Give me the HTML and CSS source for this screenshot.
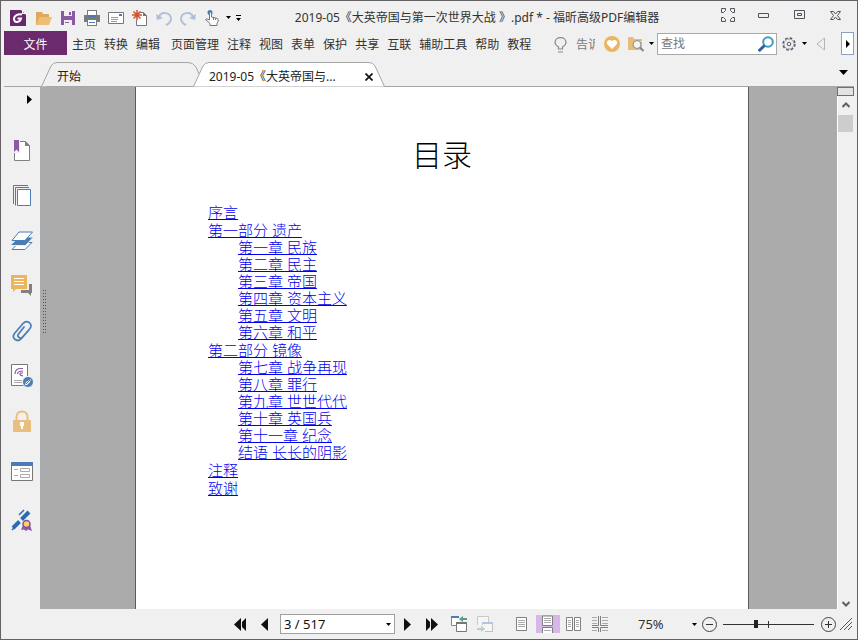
FILE: index.html
```html
<!DOCTYPE html>
<html lang="zh-CN">
<head>
    <meta charset="UTF-8">
    <meta name="viewport" content="width=device-width, initial-scale=1.0">
    <title>2019-05《大英帝国与第一次世界大战 》.pdf * - 福昕高级PDF编辑器</title>
    <link rel="stylesheet" href="styles.css">
</head>
<body>
    <header class="title-bar">
        <div class="quick-access">
            <button class="icon-btn" aria-label="福昕"><svg width="16" height="16" viewBox="0 0 16 16"><path fill="#68286b" d="M0 0h11l5 5v11H0z"/><path fill="#fff" d="M12 0v4h4l-1-1h-2V0z"/><path fill="none" stroke="#fff" stroke-width="2" d="M12 4.500C8 3.500 4 5.500 4 9c0 4.500 6 3.500 7-.5L7.500 8.500"/></svg></button>
            <button class="icon-btn" aria-label="打开"><svg width="16" height="16" viewBox="0 0 16 16"><path fill="#dfa85c" d="M0 2h6l1 2h6v3H4L1 15H0z"/><path fill="#efbd73" d="M4 7h12l-3 8H1z"/></svg></button>
            <button class="icon-btn" aria-label="保存"><svg width="16" height="16" viewBox="0 0 16 16"><path fill="#8a5aa5" d="M1 1h14v14H1z"/><path fill="#f0f0f0" d="M4 1h8v5H4zM4 10h8v5H4z"/><path fill="#8a5aa5" d="M9 2h2v3H9zM5 12h4v1H5z"/></svg></button>
            <button class="icon-btn" aria-label="打印"><svg width="16" height="16" viewBox="0 0 16 16"><path fill="#7a7a7a" d="M3 0h10v5h3v7h-3v4H3v-4H0V5h3z"/><path fill="#fff" d="M4 1h8v4H4zM4 10h8v5H4z"/><path fill="#4a7ab0" d="M4 5h8v2H4zM5 12h6v1H5z"/></svg></button>
            <button class="icon-btn" aria-label="邮件"><svg width="16" height="16" viewBox="0 0 16 16"><path fill="#fff" stroke="#777" d="M.5 2.500h15v11H.5z"/><path stroke="#999" d="M3 7.500h7M3 9.500h7M3 11.500h6"/><path fill="#4a7ab0" d="M11 4h3v2h-3z"/></svg></button>
            <button class="icon-btn" aria-label="新建"><svg width="16" height="16" viewBox="0 0 16 16"><path fill="#fff" stroke="#777" d="M4.500 2.500h7l3 3v10h-10z"/><path fill="#777" d="M11 2v4h4z"/><path stroke="#f0f0f0" stroke-width="3" d="M5 0v10M0 5h10"/><path stroke="#d4512f" stroke-width="1.500" d="M5 0v10M0 5h10M1.500 1.500l7 7M8.500 1.500l-7 7"/></svg></button>
            <button class="icon-btn" aria-label="撤销"><svg width="16" height="16" viewBox="0 0 16 16"><path fill="none" stroke="#aebfd6" stroke-width="2" d="M3 7c2-6 12-5 12 2 0 2-2 5-5 6"/><path fill="#aebfd6" d="M0 4l1 6 6-2z"/></svg></button>
            <button class="icon-btn" aria-label="重做"><svg width="16" height="16" viewBox="0 0 16 16"><path fill="none" stroke="#aebfd6" stroke-width="2" d="M13 7C11 1 1 2 1 9c0 2 2 5 5 6"/><path fill="#aebfd6" d="M16 4l-1 6-6-2z"/></svg></button>
            <button class="icon-btn" aria-label="手型工具"><svg width="16" height="16" viewBox="0 0 16 16"><circle cx="6" cy="2.500" r="2.500" fill="#4a7ab0"/><path fill="#fff" stroke="#777" d="M5.500 10V3q1-1.500 2 0v4l6 1.500q1 1 .5 3l-1 2v2h-7v-2L1.500 9.500q1-1.500 4 .5M9.500 8v2M11.500 8.500V10"/></svg></button>
            <button class="arrow-btn" aria-label="手型工具选项"><svg width="5" height="3"><path d="M0 0h5L2.500 3z"/></svg></button>
            <button class="arrow-btn" aria-label="自定义工具栏"><svg width="5" height="6"><path d="M0 0h5v1H0zM0 3h5L2.500 6z"/></svg></button>
        </div>
        <h1 class="window-title">2019-05《大英帝国与第一次世界大战 》.pdf * - 福昕高级PDF编辑器</h1>
        <div class="window-controls">
            <button aria-label="全屏"><svg width="14" height="14" viewBox="0 0 14 14"><path fill="none" stroke="#50505f" d="M.5.5h4v2l-2 2h-2zM9.500.5h4v4h-2l-2-2zM.5 9.500h2l2 2v2h-4zM13.500 9.500v4h-4v-2l2-2z"/></svg></button>
            <button aria-label="最小化"><svg width="12" height="5"><path fill="none" stroke="#50505f" d="M.5.5h10v4H.5z"/></svg></button>
            <button aria-label="最大化"><svg width="12" height="10"><path fill="none" stroke="#50505f" d="M.5.500h10v8H.5zM3.500 3.500h4v2h-4z"/></svg></button>
            <button aria-label="关闭"><svg width="12" height="9"><path fill="none" stroke="#50505f" d="M.5.500h3l2 2.500 2-2.500h3l-3 4 3 4h-3l-2-2.500-2 2.500h-3l3-4z"/></svg></button>
        </div>
    </header>

    <nav class="ribbon">
        <button class="file-btn">文件</button>
        <div class="menu">
            <button>主页</button>
            <button>转换</button>
            <button>编辑</button>
        </div>
        <div class="menu">
            <button>页面管理</button>
            <button>注释</button>
            <button>视图</button>
            <button>表单</button>
            <button>保护</button>
            <button>共享</button>
            <button>互联</button>
            <button>辅助工具</button>
            <button>帮助</button>
            <button>教程</button>
        </div>
        <div class="ribbon-tools">
            <button class="tell-me"><svg width="13" height="16" viewBox="0 0 13 16"><path fill="none" stroke="#888" stroke-width="1.200" d="M4.500 12V10C2 8.500 1 7 1 5.500 1 2.500 3.500.6 6.500.6S12 2.500 12 5.500c0 1.500-1 3-3.500 4.500v2zM4 15h5"/></svg><span>告诉</span></button>
            <button class="icon-btn" aria-label="收藏"><svg width="16" height="16"><circle cx="8" cy="8" r="8" fill="#e9b562"/><path fill="#fff" d="M8 13L3.500 8.500C1.500 6 4.500 2 8 5c3.500-3 6.500 1 4.500 3.500z"/></svg></button>
            <button class="icon-btn" aria-label="查找文件"><svg width="16" height="16"><path fill="#e9bd78" d="M0 1h5l1 2h8v11H0z"/><path stroke="#f6dcae" d="M6 5.500h8"/><circle cx="9" cy="8.500" r="4" fill="#f4f4f4" stroke="#888"/><path stroke="#888" stroke-width="2" d="M12 11.500l3.500 3.500"/></svg></button>
            <button class="arrow-btn" aria-label="查找文件选项"><svg width="5" height="3"><path d="M0 0h5L2.500 3z"/></svg></button>
            <label class="search">
                <input type="text" placeholder="查找" aria-label="查找">
                <svg width="16" height="16"><circle cx="10" cy="6" r="4.800" fill="#fff" stroke="#3b9cc4" stroke-width="2"/><path stroke="#315f9c" stroke-width="3" d="M6.500 9.500L.8 15"/></svg>
            </label>
            <button class="icon-btn" aria-label="设置"><svg width="14" height="14" viewBox="0 0 14 14"><circle cx="7" cy="7" r="6" fill="none" stroke="#55586a" stroke-width="1.400" stroke-dasharray="2.700 2"/><circle cx="7" cy="7" r="5" fill="#f0f0f0" stroke="#77798a" stroke-width=".7"/><circle cx="7" cy="7" r="1.800" fill="none" stroke="#55586a"/></svg></button>
            <button class="arrow-btn" aria-label="设置选项"><svg width="5" height="3"><path d="M0 0h5L2.500 3z"/></svg></button>
            <button class="back-btn" aria-label="上一个"><svg width="9" height="14"><path fill="none" stroke="#b5b5b5" d="M8.500 1v12l-7.500-6z"/></svg></button>
            <button class="more-btn" aria-label="更多"><svg width="4" height="8"><path d="M0 0l4 4-4 4z"/></svg></button>
        </div>
    </nav>

    <div class="tab-strip">
        <button class="tab">
            <svg class="tab-shape" width="164" height="25"><path d="M.5 24.500L10 4Q12 .5 16 .5H147Q152 .5 155 5L158 12"/></svg>
            <span>开始</span>
        </button>
        <button class="tab active">
            <svg class="tab-shape" width="192" height="25"><path d="M.5 24.500L10 4Q12 .5 16 .5H176Q180 .5 182 4L191.500 24.500"/></svg>
            <span>2019-05《大英帝国与...</span>
            <svg width="8" height="8"><path stroke="#111" stroke-width="1.700" d="M.5.5l7 7M7.500.5l-7 7"/></svg>
        </button>
        <button class="tab-list" aria-label="标签列表"><svg width="9" height="5"><path d="M0 0h9L4.500 5z"/></svg></button>
    </div>

    <main class="workspace">
        <aside class="sidebar">
            <button class="expand" aria-label="展开"><svg width="5" height="9"><path d="M0 0l5 4.500L0 9z"/></svg></button>
            <button aria-label="书签"><svg width="18" height="22"><path fill="#fff" stroke="#808080" d="M1.500 1.500h11l4 4v15h-15z"/><path fill="#808080" d="M12 1v5h5z"/><path fill="#f0f0f0" d="M0 0h7v13H0z"/><path fill="#8a5aa5" d="M1 0h5v12l-2.500-2.500L1 12z"/></svg></button>
            <button aria-label="页面"><svg width="18" height="22"><path fill="none" stroke="#4a7db5" d="M.5 19V.5H15M2.500 20.500v-18H16"/><path fill="#fff" stroke="#4a7db5" d="M4.500 4.500h13v16h-13z"/></svg></button>
            <button aria-label="图层"><svg width="24" height="20"><path fill="#fff" stroke="#4a7db5" d="M2 18.500h13l7-7H9z"/><path fill="#4a7db5" stroke="#f0f0f0" d="M0 14.500h15.500l8-8.500H9z"/><path fill="#fff" stroke="#4a7db5" d="M2 9.500h13l7.500-8.500H9z"/></svg></button>
            <button aria-label="注释"><svg width="22" height="22"><path fill="#808080" d="M10 9h11v9h-1v3l-3-3h-7z"/><path fill="#f0f0f0" d="M0 0h18v15H0z"/><path fill="#edb45e" d="M0 0h16v14H5l-3 3v-3H0z"/><path stroke="#fff" d="M3 3.500h10M3 6.500h10M3 9.500h10"/></svg></button>
            <button aria-label="附件"><svg width="20" height="22" viewBox="0 0 20 22"><path fill="none" stroke="#4a7db5" stroke-width="1.700" stroke-linecap="round" d="M16.500 10.500l-7 8c-4 4.500-10.500 0-7-5l8.500-10c4-4.500 10.500.5 7 5l-7.500 8.500c-2.500 2.500-6-.5-4-3L12 7"/></svg></button>
            <button aria-label="签名"><svg width="22" height="23"><path fill="#fff" stroke="#777" d="M.5.500h16v21H.5z"/><path fill="none" stroke="#8a5aa5" stroke-width="1.200" d="M4 10q0-5 5-5.500h3M6.500 10q0-3 5.500-3M12 9H9.500q-2 2 2.500 3"/><path stroke="#aaa" d="M3 16.500h8M3 18.500h8"/><circle cx="17" cy="18" r="5.500" fill="#4a7db5" stroke="#f0f0f0"/><path fill="#fff" d="M20 15l-1 3-3 3-2 0 1-3z"/><path stroke="#4a7db5" d="M15 20l4-4"/></svg></button>
            <button aria-label="安全"><svg width="18" height="22"><path fill="none" stroke="#e8bf7c" stroke-width="2" d="M3.500 11V7c0-7.500 11-7.500 11 0v4"/><rect y="10" width="18" height="12" rx="1" fill="#e8bf7c"/><path fill="#fff" d="M7 12h4v4h-1v3H8v-3H7z"/></svg></button>
            <button class="spaced" aria-label="表单"><svg width="22" height="20"><path fill="#fff" stroke="#777" d="M.5.5h21v18H.5z"/><path fill="#4a7db5" d="M0 0h22v4H0z"/><path fill="none" stroke="#aaa" d="M3 7.500h4M3 13.500h4M9.500 6.500h9v3h-9zM9.500 12.500h9v3h-9z"/></svg></button>
            <button aria-label="数字签名"><svg width="22" height="22"><path stroke="#2d6bb0" stroke-width="4" d="M2 19l6.500-6.500M10.500 10.500L18 3"/><path stroke="#2d6bb0" stroke-width="1.500" d="M8 6l5-5M1 21l3-3"/><path fill="#8a5aa5" d="M12 16l-2 5 3-.5 2 1.500 2-1.500 4 1.500-2-6z"/><circle cx="15.500" cy="15" r="3.500" fill="#f6d36a" stroke="#8a4aa5" stroke-width="1.500"/></svg></button>
        </aside>
        <div class="splitter"><span class="grip"></span></div>
        <section class="canvas">
            <article class="page">
                <h2>目录</h2>
                <ul class="toc">
                    <li><a href="#">序言</a></li>
                    <li>
                        <a href="#">第一部分 遗产</a>
                        <ul>
                            <li><a href="#">第一章 民族</a></li>
                            <li><a href="#">第二章 民主</a></li>
                            <li><a href="#">第三章 帝国</a></li>
                            <li><a href="#">第四章 资本主义</a></li>
                            <li><a href="#">第五章 文明</a></li>
                            <li><a href="#">第六章 和平</a></li>
                        </ul>
                    </li>
                    <li>
                        <a href="#">第二部分 镜像</a>
                        <ul>
                            <li><a href="#">第七章 战争再现</a></li>
                            <li><a href="#">第八章 罪行</a></li>
                            <li><a href="#">第九章 世世代代</a></li>
                            <li><a href="#">第十章 英国兵</a></li>
                            <li><a href="#">第十一章 纪念</a></li>
                            <li><a href="#">结语 长长的阴影</a></li>
                        </ul>
                    </li>
                    <li><a href="#">注释</a></li>
                    <li><a href="#">致谢</a></li>
                </ul>
            </article>
        </section>
        <div class="scrollbar">
            <span class="split-box"></span>
            <button aria-label="向上滚动"><svg width="8" height="6"><path fill="none" stroke="#606060" stroke-width="2" d="M.5 5L4 1.500 7.500 5"/></svg></button>
            <div class="track"><span class="thumb"></span></div>
            <button class="scroll-down" aria-label="向下滚动"><svg width="8" height="6"><path fill="none" stroke="#606060" stroke-width="2" d="M.5 1L4 4.500 7.500 1"/></svg></button>
        </div>
    </main>

    <footer class="status-bar">
        <div class="page-nav">
            <button aria-label="第一页"><svg width="13" height="13"><path fill="#111" d="M7 0v13L0 6.500zM12 0v13L8 9V4z"/></svg></button>
            <button aria-label="上一页"><svg width="8" height="13"><path fill="#111" d="M8 0v13L1 6.500z"/></svg></button>
            <div class="page-box">
                <input type="text" value="3 / 517" aria-label="页码">
                <button class="arrow-btn" aria-label="选择页码"><svg width="5" height="3"><path d="M0 0h5L2.500 3z"/></svg></button>
            </div>
            <button aria-label="下一页"><svg width="8" height="13"><path fill="#111" d="M1 0v13l7-6.500z"/></svg></button>
            <button aria-label="最后一页"><svg width="13" height="13"><path fill="#111" d="M6 0v13l7-6.500zM1 0v13l4-4V4z"/></svg></button>
        </div>
        <div class="view-modes history">
            <button aria-label="上一视图"><svg width="16" height="16"><path fill="#fff" stroke="#888" d="M.5.500h11v9H.5z"/><path fill="#4a7db5" d="M0 0h8v2H0z"/><path fill="#f0f0f0" d="M8 0h8v6H8z"/><path fill="#fff" stroke="#777" d="M5.500 6.500h10v9h-10z"/><path stroke="#777" stroke-width="2" d="M5 7h11"/><path fill="#5b9e85" d="M8 3l4-3v2h4v2h-4v2z"/></svg></button>
            <button aria-label="下一视图"><svg width="16" height="16"><path fill="#f6f6f6" stroke="#c8c8c8" d="M.5.500h11v9H.5z"/><path fill="#f6f6f6" stroke="#c0c0c0" d="M5.500 6.500h10v9h-10z"/><path stroke="#b2c6de" stroke-width="2" d="M5 7h11"/><path fill="#f0f0f0" d="M0 9h8v7H0z"/><path fill="#b5d2c6" d="M8 13l-4-3v2H0v2h4v2z"/></svg></button>
        </div>
        <div class="view-modes">
            <button aria-label="单页"><svg width="12" height="14"><path fill="#fff" stroke="#808080" d="M.5.500h10v13H.5z"/><path stroke="#aaa" d="M2 3.500h7M2 5.500h7M2 7.500h7M2 9.500h7"/></svg></button>
            <button class="selected" aria-label="连续"><svg width="12" height="18"><path fill="#fff" stroke="#808080" d="M.5 1v9.500h10V1zM.5 18v-5.500h10V18"/><path stroke="#aaa" d="M2 3.500h7M2 5.500h7M2 7.500h7M2 15.500h7"/></svg></button>
            <button aria-label="对开"><svg width="16" height="14"><path fill="#fff" stroke="#808080" d="M.5.500h6v13h-6zM8.500.500h6v13h-6z"/><path stroke="#aaa" d="M2 3.500h3M2 5.500h3M2 7.500h3M2 9.500h3M10 3.500h3M10 5.500h3M10 7.500h3M10 9.500h3"/></svg></button>
            <button aria-label="连续对开"><svg width="16" height="16"><path fill="none" stroke="#808080" d="M6.500 0v9.500H0M8.500 0v9.500H16M0 11.500h6.500V16M16 11.500H8.500V16"/><path stroke="#aaa" d="M0 1.500h5M0 4.500h5M0 7.500h5M10 1.500h6M10 4.500h6M10 7.500h6M0 14.500h5M10 14.500h6"/></svg></button>
        </div>
        <div class="zoom">
            <button class="zoom-level">75% <svg width="5" height="3"><path d="M0 0h5L2.500 3z"/></svg></button>
            <button aria-label="缩小"><svg width="15" height="15"><circle cx="7.500" cy="7.500" r="7" fill="none" stroke="#444"/><path stroke="#333" d="M4 7.500h7"/></svg></button>
            <input type="range" min="0" max="100" value="36" aria-label="缩放">
            <button aria-label="放大"><svg width="15" height="15"><circle cx="7.500" cy="7.500" r="7" fill="none" stroke="#444"/><path stroke="#333" d="M4 7.500h7M7.500 4v7"/></svg></button>
            <svg width="12" height="12"><path stroke="#555" d="M0 12L12 0M4 12l8-8M8 12l4-4"/></svg>
        </div>
    </footer>
</body>
</html>
```
FILE: styles.css
```css
* {
    box-sizing: border-box;
}

body {
    display: flex;
    flex-direction: column;
    height: 100vh;
    margin: 0;
    padding: 3px 3px 0;
    border: 1px solid #646264;
    background: #f0f0f0;
    color: #333;
    font-family: "Noto Sans", "Noto Sans CJK SC", sans-serif;
    font-size: 12px;
    line-height: 18px;
    overflow: hidden;
}

button {
    display: flex;
    align-items: center;
    justify-content: center;
    flex: none;
    margin: 0;
    padding: 0;
    border: none;
    background: none;
    color: inherit;
    font: inherit;
    white-space: nowrap;
}

input {
    min-width: 0;
    margin: 0;
    padding: 0;
    border: none;
    outline: none;
    background: none;
    color: inherit;
    font: inherit;
}

svg {
    flex: none;
}

.icon-btn {
    width: 24px;
    height: 24px;
}

.arrow-btn {
    width: 10px;
    height: 20px;
}

/* title bar */
.title-bar {
    display: flex;
    align-items: center;
    height: 27px;
    padding-left: 2px;
}

.quick-access {
    display: flex;
    align-items: center;
}

.quick-access .icon-btn:first-child {
    margin-right: 2px;
}

.quick-access .arrow-btn {
    width: 8px;
    margin-right: 2px;
}

.window-title {
    flex: 1;
    margin: 0;
    font-size: 12px;
    font-weight: normal;
    text-align: center;
    white-space: nowrap;
}

.window-controls {
    display: flex;
    height: 22px;
    align-self: flex-start;
}

.window-controls button {
    width: 36px;
}

/* ribbon */
.ribbon {
    display: flex;
    align-items: center;
    height: 25px;
}

.file-btn {
    width: 63px;
    height: 24px;
    align-self: flex-start;
    margin-right: 1px;
    padding-top: 4px;
    background: #6b2a6b;
    color: #fff;
}

.menu {
    display: flex;
    margin-right: 3px;
    padding-top: 3px;
}

.menu button {
    padding: 0 4px;
}

.ribbon-tools {
    display: flex;
    align-items: center;
    margin-left: auto;
    height: 24px;
}

.ribbon-tools .arrow-btn {
    width: 7px;
}

.tell-me {
    gap: 9px;
    margin-right: 5px;
    padding-top: 2px;
    color: #777;
}

.tell-me span {
    width: 19px;
    overflow: hidden;
}

.search {
    display: flex;
    align-items: center;
    width: 120px;
    height: 22px;
    margin-left: 2px;
    padding: 0 2px 0 3px;
    border: 1px solid #a9a9a9;
    background: #fff;
}

.search input {
    flex: 1;
}

.search input::placeholder {
    color: #777;
    opacity: 1;
}

.back-btn {
    width: 24px;
}

.more-btn {
    width: 13px;
    height: 23px;
    margin-left: 9px;
    border: 1px solid #8fa3b8;
    background: #fff;
}

/* document tabs */
.tab-strip {
    display: flex;
    align-items: flex-end;
    height: 31px;
    padding-left: 37px;
    border-bottom: 1px solid #a6a6a6;
}

.tab {
    position: relative;
    justify-content: flex-start;
    width: 164px;
    height: 24px;
    padding: 6px 16px 0;
    color: #222;
}

.tab span,
.tab svg {
    position: relative;
}

.tab .tab-shape {
    position: absolute;
    left: 0;
    top: 0;
    fill: #f0f0f0;
    stroke: #a6a6a6;
}

.tab.active {
    justify-content: space-between;
    width: 192px;
    margin-left: -12px;
    padding-right: 12px;
}

.tab.active .tab-shape {
    fill: #fff;
}

.tab-list {
    width: 22px;
    height: 28px;
    margin-left: auto;
}

/* workspace */
.workspace {
    display: flex;
    flex: 1;
    min-height: 0;
}

.sidebar {
    width: 36px;
}

.sidebar button {
    width: 36px;
    height: 45px;
}

.sidebar .expand {
    height: 41px;
    padding: 0 0 16px 14px;
}

.sidebar .spaced {
    margin: 6px 0 3px;
}

.splitter {
    display: flex;
    align-items: center;
    justify-content: flex-end;
    width: 7px;
    padding-bottom: 76px;
    background: #a9abad;
}

.grip {
    width: 4px;
    height: 45px;
    background: repeating-linear-gradient(#a9abad 0 2px, transparent 2px 3px), repeating-linear-gradient(90deg, #555 0 1px, #a9abad 1px 2px);
}

.canvas {
    display: flex;
    flex: 1;
    padding: 0 88px;
    background: #ababab;
}

.page {
    flex: 1;
    padding: 46px 72px 0;
    border: solid #5c5c5c;
    border-width: 0 1px;
    background: #fff;
    color: #000;
}

.page h2 {
    margin: 0 0 27px;
    font-size: 30px;
    font-weight: 300;
    line-height: 44px;
    text-align: center;
}

.toc,
.toc ul {
    margin: 0;
    padding: 0;
    list-style: none;
}

.toc {
    display: grid;
    gap: 1px;
    font-size: 15px;
    font-weight: 300;
    line-height: 17px;
}

.toc ul {
    padding-left: 30px;
}

.toc a {
    color: #0000f0;
}

.scrollbar {
    display: flex;
    flex-direction: column;
    width: 17px;
    border-left: 1px solid #fff;
}

.scrollbar button {
    width: 16px;
    height: 17px;
}

.scrollbar .scroll-down {
    height: 11px;
}

.split-box {
    height: 9px;
    margin-left: -1px;
    border: 1px solid #707070;
    background: #e3e3e3;
}

.track {
    flex: 1;
    padding-top: 2px;
}

.thumb {
    display: block;
    width: 15px;
    height: 17px;
    background: #cdcdcd;
}

/* status bar */
.status-bar {
    display: flex;
    align-items: center;
    height: 30px;
    padding-left: 224px;
    font-size: 13px;
}

.page-nav,
.view-modes,
.zoom {
    display: flex;
    align-items: center;
}

.page-nav > button,
.zoom > button {
    width: 24px;
    height: 20px;
}

.page-box {
    display: flex;
    align-items: center;
    width: 115px;
    height: 20px;
    margin-left: 4px;
    padding: 0 1px 0 3px;
    border: 1px solid #a0a0a0;
    background: #fff;
    color: #111;
}

.page-box input {
    flex: 1;
}

.view-modes {
    margin-right: 11px;
}

.history {
    margin-left: 3px;
}

.view-modes button {
    width: 26px;
    height: 20px;
}

.view-modes .selected {
    width: 24px;
    margin: 0 1px;
    height: 18px;
    background: #d5b8e8;
}

.zoom {
    margin-left: auto;
    padding-right: 2px;
}

.zoom > .zoom-level {
    justify-content: space-between;
    width: 59px;
}

.zoom input {
    width: 91px;
    height: 16px;
    margin: 0 2px;
    appearance: none;
    background: linear-gradient(#333, #333) 50% 50% / 1px 7px no-repeat, linear-gradient(#333, #333) 0 50% / 100% 1px no-repeat;
}

.zoom input::-webkit-slider-thumb {
    appearance: none;
    width: 4px;
    height: 8px;
    background: #222;
}
```
